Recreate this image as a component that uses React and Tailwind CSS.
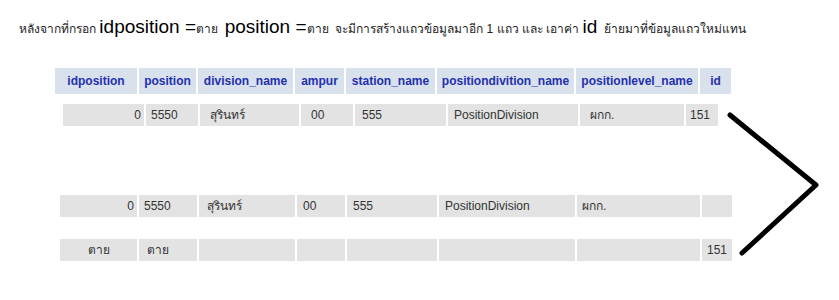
import React from "react";

const headers = [
  { label: "idposition", w: 82 },
  { label: "position", w: 57 },
  { label: "division_name", w: 95 },
  { label: "ampur", w: 49 },
  { label: "station_name", w: 89 },
  { label: "positiondivition_name", w: 137 },
  { label: "positionlevel_name", w: 122 },
  { label: "id", w: 31 },
];

// cells: [text, width, padding classes, align]
const rowOne = [
  ["0", 81, "pr-[3px]", "right"],
  ["5550", 52, "pl-[5px]", "left"],
  ["สุรินทร์", 99, "pl-[10px]", "left"],
  ["00", 52, "pl-[10px]", "left"],
  ["555", 91, "pl-[7px]", "left"],
  ["PositionDivision", 130, "pl-[6px]", "left"],
  ["ผกก.", 104, "pl-[10px]", "left"],
  ["151", 32, "pl-[4px]", "left"],
];

const rowOld = [
  ["0", 77, "pr-[3px]", "right"],
  ["5550", 58, "pl-[5px]", "left"],
  ["สุรินทร์", 96, "pl-[8px]", "left"],
  ["00", 48, "pl-[6px]", "left"],
  ["555", 90, "pl-[6px]", "left"],
  ["PositionDivision", 136, "pl-[6px]", "left"],
  ["ผกก.", 123, "pl-[5px]", "left"],
  ["", 30, "", "left"],
];

const rowNew = [
  ["ตาย", 77, "", "center"],
  ["ตาย", 58, "pl-[8px]", "left"],
  ["", 96, "", "left"],
  ["", 48, "", "left"],
  ["", 90, "", "left"],
  ["", 136, "", "left"],
  ["", 123, "", "left"],
  ["151", 30, "pl-[5px]", "left"],
];

function DataRow({ cells, className }) {
  return (
    <div className={"flex gap-[2px] h-[22px] " + className}>
      {cells.map(([text, w, pad, align], i) => (
        <div
          key={i}
          style={{ width: w }}
          className={
            "bg-[#e3e3e3] flex items-center text-[12px] text-[#333] shrink-0 " +
            pad +
            (align === "right"
              ? " justify-end"
              : align === "center"
              ? " justify-center"
              : " justify-start")
          }
        >
          {text}
        </div>
      ))}
    </div>
  );
}

export default function App() {
  return (
    <div className="relative w-[839px] h-[300px] bg-white overflow-hidden font-['Liberation_Sans','Noto_Sans','DejaVu_Sans',sans-serif] text-black">
      <div className="flex items-baseline pl-[19px] pt-[13px] h-[40px] text-[12px] text-[#222] whitespace-pre">
        <span>หลังจากที่กรอก </span>
        <span className="text-[19px] text-black">idposition =</span>
        <span>ตาย  </span>
        <span className="text-[19px] text-black">position =</span>
        <span>ตาย  จะมีการสร้างแถวข้อมูลมาอีก 1 แถว และ เอาค่า </span>
        <span className="text-[19px] text-black">id</span>
        <span>  ย้ายมาที่ข้อมูลแถวใหม่แทน</span>
      </div>

      <div className="flex gap-[2px] h-[26px] ml-[55px] mt-[28px]">
        {headers.map((h) => (
          <div
            key={h.label}
            style={{ width: h.w }}
            className="bg-[#d9e1ec] flex items-center justify-center text-[12px] font-bold text-[#2430b0] shrink-0"
          >
            {h.label}
          </div>
        ))}
      </div>

      <DataRow cells={rowOne} className="ml-[63px] mt-[10px]" />
      <DataRow cells={rowOld} className="ml-[60px] mt-[69px]" />
      <DataRow cells={rowNew} className="ml-[60px] mt-[22px]" />

      <svg
        className="absolute left-0 top-0 pointer-events-none"
        width="839"
        height="300"
        viewBox="0 0 839 300"
      >
        <polyline
          points="730,115 816,185 742,253"
          fill="none"
          stroke="#000"
          strokeWidth="5"
          strokeLinecap="round"
          strokeLinejoin="round"
        />
      </svg>
    </div>
  );
}
